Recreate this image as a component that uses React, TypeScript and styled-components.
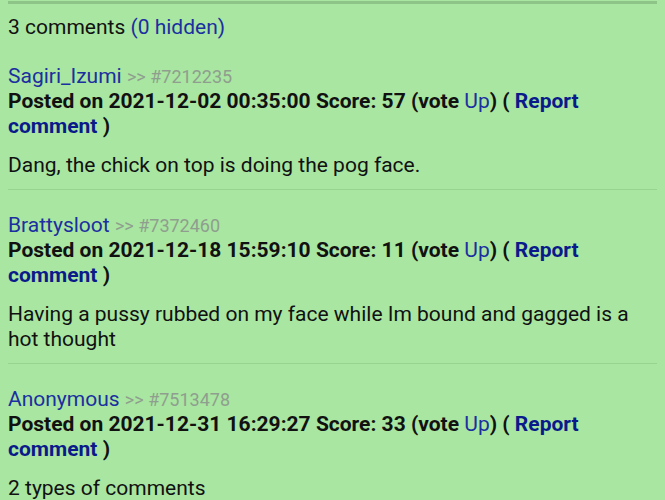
import React from 'react';
import styled, { createGlobalStyle } from 'styled-components';

const GlobalStyle = createGlobalStyle`
  html, body {
    margin: 0;
    padding: 0;
    background: #a8e6a1;
  }
  body {
    font-family: Roboto, "Noto Sans", "Liberation Sans", sans-serif;
    color: #111;
  }
`;

const Page = styled.div`
  padding: 0 8px;
  min-height: 500px;
  background: #a8e6a1;
`;

const TopRule = styled.div`
  margin-top: 1px;
  height: 3px;
  background: #8ec487;
`;

const CountLine = styled.div`
  margin-top: 11px;
  font-size: 21px;
  line-height: 25px;
`;

const Link = styled.a<{ $bold?: boolean; $dark?: boolean }>`
  color: ${(p) => (p.$dark ? '#0b1a8a' : '#1b2fa0')};
  font-weight: ${(p) => (p.$bold ? 700 : 400)};
  text-decoration: none;
  cursor: pointer;
`;

const CommentBlock = styled.div`
  padding-top: 24px;
  & + & {
    padding-top: 23px;
    border-top: 1px solid #97d48f;
  }
`;

const Header = styled.div`
  font-size: 21px;
  line-height: 25px;
`;

const PostId = styled.span`
  color: #8f9e8e;
  font-size: 18px;
`;

const Meta = styled.div`
  font-size: 21px;
  line-height: 25px;
  font-weight: 700;
`;

const Body = styled.p`
  margin: 14px 0 11px;
  font-size: 21px;
  line-height: 25px;
`;

type Comment = {
  author: string;
  id: string;
  posted: string;
  score: number;
  text: string;
};

const comments: Comment[] = [
  {
    author: 'Sagiri_Izumi',
    id: '7212235',
    posted: '2021-12-02 00:35:00',
    score: 57,
    text: 'Dang, the chick on top is doing the pog face.',
  },
  {
    author: 'Brattysloot',
    id: '7372460',
    posted: '2021-12-18 15:59:10',
    score: 11,
    text: 'Having a pussy rubbed on my face while Im bound and gagged is a hot thought',
  },
  {
    author: 'Anonymous',
    id: '7513478',
    posted: '2021-12-31 16:29:27',
    score: 33,
    text: '2 types of comments',
  },
];

const App: React.FC = () => {
  return (
    <>
      <GlobalStyle />
      <Page>
        <TopRule />
        <CountLine>
          3 comments <Link>(0 hidden)</Link>
        </CountLine>
        {comments.map((c) => (
          <CommentBlock key={c.id}>
            <Header>
              <Link>{c.author}</Link> <PostId>&gt;&gt; #{c.id}</PostId>
            </Header>
            <Meta>
              Posted on {c.posted} Score: {c.score} (vote <Link>Up</Link>) ({' '}
              <Link $bold $dark>Report comment</Link> )
            </Meta>
            <Body>{c.text}</Body>
          </CommentBlock>
        ))}
      </Page>
    </>
  );
};

export default App;
